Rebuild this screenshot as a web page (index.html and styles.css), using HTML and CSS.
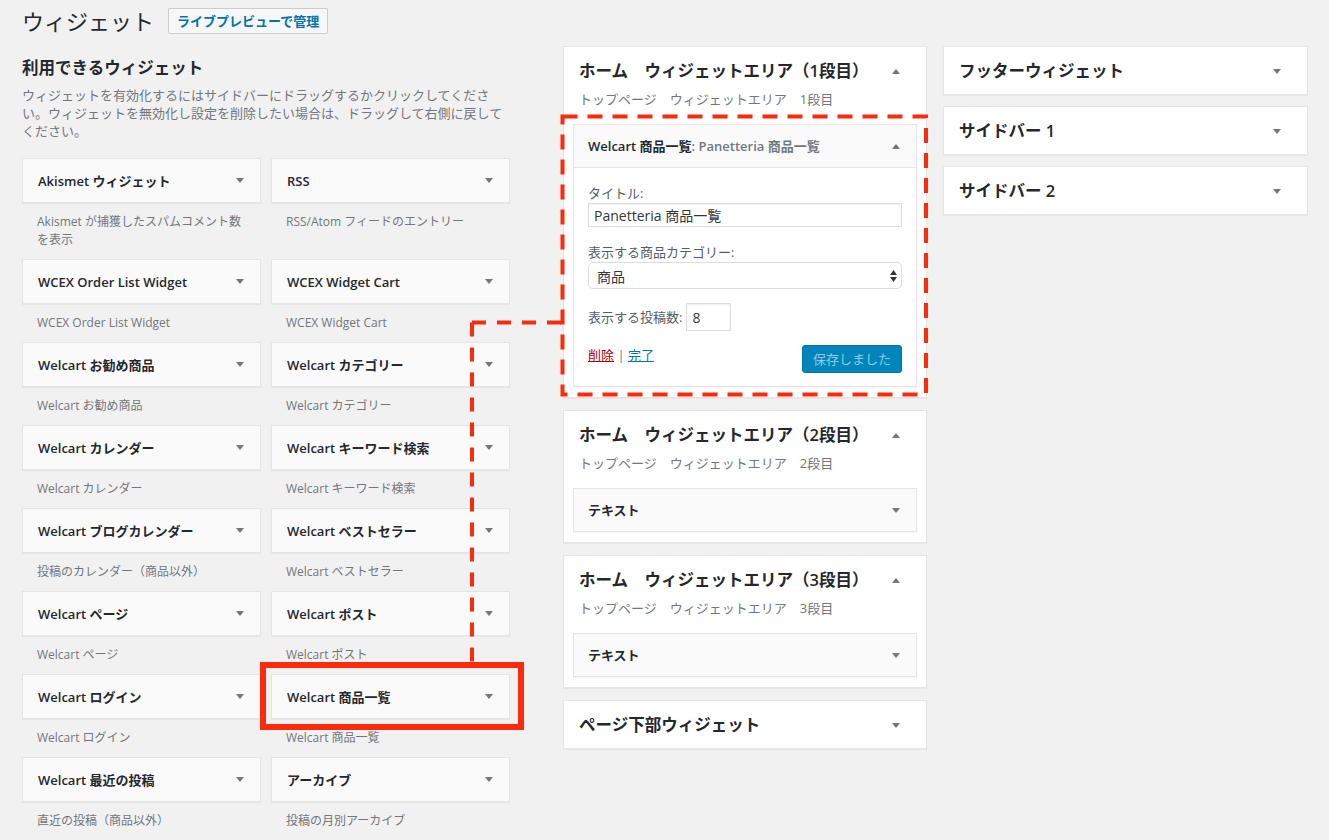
FILE: index.html
```html
<!DOCTYPE html>
<html lang="ja">
<head>
<meta charset="utf-8">
<title>ウィジェット</title>
<link rel="stylesheet" href="styles.css">
</head>
<body>
<div class="wrap">
  <div class="page-head">
    <h1>ウィジェット</h1>
    <a class="head-btn" href="#">ライブプレビューで管理</a>
  </div>

  <div class="columns">
    <section class="available">
      <h2>利用できるウィジェット</h2>
      <p class="intro">ウィジェットを有効化するにはサイドバーにドラッグするかクリックしてください。ウィジェットを無効化し設定を削除したい場合は、ドラッグして右側に戻してください。</p>
      <ul class="widget-grid">
        <li><div class="widget-top"><h3>Akismet ウィジェット</h3><span class="arrow-down"></span></div><p class="widget-desc">Akismet が捕獲したスパムコメント数を表示</p></li>
        <li><div class="widget-top"><h3>RSS</h3><span class="arrow-down"></span></div><p class="widget-desc">RSS/Atom フィードのエントリー</p></li>
        <li><div class="widget-top"><h3>WCEX Order List Widget</h3><span class="arrow-down"></span></div><p class="widget-desc">WCEX Order List Widget</p></li>
        <li><div class="widget-top"><h3>WCEX Widget Cart</h3><span class="arrow-down"></span></div><p class="widget-desc">WCEX Widget Cart</p></li>
        <li><div class="widget-top"><h3>Welcart お勧め商品</h3><span class="arrow-down"></span></div><p class="widget-desc">Welcart お勧め商品</p></li>
        <li><div class="widget-top"><h3>Welcart カテゴリー</h3><span class="arrow-down"></span></div><p class="widget-desc">Welcart カテゴリー</p></li>
        <li><div class="widget-top"><h3>Welcart カレンダー</h3><span class="arrow-down"></span></div><p class="widget-desc">Welcart カレンダー</p></li>
        <li><div class="widget-top"><h3>Welcart キーワード検索</h3><span class="arrow-down"></span></div><p class="widget-desc">Welcart キーワード検索</p></li>
        <li><div class="widget-top"><h3>Welcart ブログカレンダー</h3><span class="arrow-down"></span></div><p class="widget-desc">投稿のカレンダー（商品以外）</p></li>
        <li><div class="widget-top"><h3>Welcart ベストセラー</h3><span class="arrow-down"></span></div><p class="widget-desc">Welcart ベストセラー</p></li>
        <li><div class="widget-top"><h3>Welcart ページ</h3><span class="arrow-down"></span></div><p class="widget-desc">Welcart ページ</p></li>
        <li><div class="widget-top"><h3>Welcart ポスト</h3><span class="arrow-down"></span></div><p class="widget-desc">Welcart ポスト</p></li>
        <li><div class="widget-top"><h3>Welcart ログイン</h3><span class="arrow-down"></span></div><p class="widget-desc">Welcart ログイン</p></li>
        <li><div class="widget-top"><h3>Welcart 商品一覧</h3><span class="arrow-down"></span></div><p class="widget-desc">Welcart 商品一覧</p></li>
        <li><div class="widget-top"><h3>Welcart 最近の投稿</h3><span class="arrow-down"></span></div><p class="widget-desc">直近の投稿（商品以外）</p></li>
        <li><div class="widget-top"><h3>アーカイブ</h3><span class="arrow-down"></span></div><p class="widget-desc">投稿の月別アーカイブ</p></li>
      </ul>
    </section>

    <section class="sidebars sidebars-mid">
      <div class="sidebar-box">
        <div class="sidebar-name"><h2>ホーム　ウィジェットエリア（1段目）</h2><span class="arrow-up"></span></div>
        <p class="sidebar-desc">トップページ　ウィジェットエリア　1段目</p>
        <div class="sidebar-widgets">
          <div class="widget-open">
            <div class="widget-head"><h3>Welcart 商品一覧<span class="in-title">: Panetteria 商品一覧</span></h3><span class="arrow-up"></span></div>
            <div class="widget-inside">
              <label class="field-label">タイトル:</label>
              <input class="text-input" type="text" value="Panetteria 商品一覧">
              <label class="field-label field-gap">表示する商品カテゴリー:</label>
              <div class="select-box"><span>商品</span>
                <svg class="select-arrows" width="7" height="12" viewBox="0 0 7 12"><path d="M3.5 0 L7 5 H0 Z M0 7 H7 L3.5 12 Z" fill="#333"/></svg>
              </div>
              <div class="num-row"><label class="field-label">表示する投稿数:</label><input class="num-input" type="text" value="8"></div>
              <div class="widget-actions">
                <div class="action-links"><a class="link-delete" href="#">削除</a> <span class="sep">|</span> <a class="link-done" href="#">完了</a></div>
                <span class="save-btn">保存しました</span>
              </div>
            </div>
          </div>
        </div>
      </div>

      <div class="sidebar-box">
        <div class="sidebar-name"><h2>ホーム　ウィジェットエリア（2段目）</h2><span class="arrow-up"></span></div>
        <p class="sidebar-desc">トップページ　ウィジェットエリア　2段目</p>
        <div class="sidebar-widgets">
          <div class="widget-top inner"><h3>テキスト</h3><span class="arrow-down"></span></div>
        </div>
      </div>

      <div class="sidebar-box">
        <div class="sidebar-name"><h2>ホーム　ウィジェットエリア（3段目）</h2><span class="arrow-up"></span></div>
        <p class="sidebar-desc">トップページ　ウィジェットエリア　3段目</p>
        <div class="sidebar-widgets">
          <div class="widget-top inner"><h3>テキスト</h3><span class="arrow-down"></span></div>
        </div>
      </div>

      <div class="sidebar-box closed">
        <div class="sidebar-name"><h2>ページ下部ウィジェット</h2><span class="arrow-down"></span></div>
      </div>
    </section>

    <section class="sidebars sidebars-right">
      <div class="sidebar-box closed">
        <div class="sidebar-name"><h2>フッターウィジェット</h2><span class="arrow-down"></span></div>
      </div>
      <div class="sidebar-box closed">
        <div class="sidebar-name"><h2>サイドバー 1</h2><span class="arrow-down"></span></div>
      </div>
      <div class="sidebar-box closed">
        <div class="sidebar-name"><h2>サイドバー 2</h2><span class="arrow-down"></span></div>
      </div>
    </section>
  </div>
</div>

<svg class="annotations" width="1329" height="840" viewBox="0 0 1329 840">
  <rect x="263" y="665" width="258" height="62" fill="none" stroke="#fb2b0b" stroke-width="6"/>
  <path d="M472 322.5 V662" fill="none" stroke="#fb2b0b" stroke-width="4" stroke-dasharray="14 11"/>
  <path d="M472 322.5 H562.5" fill="none" stroke="#fb2b0b" stroke-width="4" stroke-dasharray="14 11"/>
  <rect x="562.5" y="116.5" width="363.5" height="278" fill="none" stroke="#fb2b0b" stroke-width="4" stroke-dasharray="15 10"/>
</svg>
</body>
</html>
```

FILE: styles.css
```css
html, body {
  margin: 0;
  height: 100%;
  overflow: hidden;
}

body {
  background: #f1f1f1;
  font-family: "Open Sans", "Noto Sans CJK JP", sans-serif;
  font-size: 13px;
  color: #444;
}

.wrap {
  padding: 8px 0 0 22px;
}

/* page heading */
.page-head {
  display: flex;
  align-items: center;
  gap: 14px;
  height: 26px;
}

.page-head h1 {
  margin: 0;
  font-size: 22px;
  font-weight: 400;
  line-height: 26px;
  color: #23282d;
}

.head-btn {
  display: block;
  height: 24px;
  line-height: 24px;
  padding: 0 8px;
  border: 1px solid #ccc;
  border-radius: 2px;
  background: #f7f7f7;
  color: #0073aa;
  font-size: 13px;
  font-weight: 600;
  text-decoration: none;
}

/* columns */
.columns {
  display: flex;
  align-items: flex-start;
  margin-top: 12px;
}

.available {
  width: 488px;
  padding-top: 11px;
}

.available h2 {
  margin: 0;
  font-size: 16.5px;
  font-weight: 600;
  line-height: 22px;
  color: #23282d;
}

.intro {
  margin: 7px 0 0;
  font-size: 13px;
  line-height: 18px;
  color: #72777c;
}

.widget-grid {
  list-style: none;
  margin: 18px 0 0;
  padding: 0;
  display: grid;
  grid-template-columns: 239px 239px;
  column-gap: 10px;
}

.widget-top {
  height: 43px;
  border: 1px solid #e5e5e5;
  background: #fafafa;
  box-shadow: 0 1px 1px rgba(0, 0, 0, 0.04);
  display: flex;
  align-items: center;
  justify-content: space-between;
  padding: 0 16px 0 15px;
}

.widget-top.inner {
  height: 42px;
  padding-left: 14px;
}

.widget-top h3,
.widget-head h3 {
  margin: 0;
  font-size: 13px;
  font-weight: 600;
  line-height: 18px;
  color: #23282d;
  white-space: nowrap;
}

.arrow-down {
  width: 0;
  height: 0;
  border-left: 4px solid transparent;
  border-right: 4px solid transparent;
  border-top: 5px solid #72777c;
  flex: none;
}

.arrow-up {
  width: 0;
  height: 0;
  border-left: 4px solid transparent;
  border-right: 4px solid transparent;
  border-bottom: 5px solid #72777c;
  flex: none;
}

.widget-desc {
  margin: 10px 0;
  padding: 0 15px;
  min-height: 18px;
  font-size: 12px;
  line-height: 18px;
  color: #72777c;
}

/* sidebars */
.sidebars-mid {
  width: 364px;
  margin-left: 53px;
}

.sidebars-right {
  width: 365px;
  margin-left: 16px;
}

.sidebar-box {
  background: #fff;
  border: 1px solid #e5e5e5;
  box-shadow: 0 1px 1px rgba(0, 0, 0, 0.04);
  margin-bottom: 12px;
}

.sidebars-right .sidebar-box {
  margin-bottom: 11px;
}

.sidebar-name {
  display: flex;
  align-items: center;
  justify-content: space-between;
  padding: 14px 26px 0 15px;
}

.sidebar-box.closed .sidebar-name {
  padding-bottom: 13px;
}

.sidebar-name h2 {
  margin: 0;
  font-size: 16.5px;
  font-weight: 600;
  line-height: 20px;
  color: #23282d;
  white-space: nowrap;
}

.sidebar-desc {
  margin: 9px 15px 0;
  font-size: 13px;
  line-height: 18px;
  color: #72777c;
}

.sidebar-widgets {
  padding: 16px 9px 10px;
}

/* expanded widget */
.widget-open {
  border: 1px solid #e5e5e5;
  box-shadow: 0 1px 1px rgba(0, 0, 0, 0.04);
  background: #fff;
}

.widget-head {
  height: 42px;
  background: #fafafa;
  border-bottom: 1px solid #e5e5e5;
  display: flex;
  align-items: center;
  justify-content: space-between;
  padding: 0 16px 0 14px;
}

.in-title {
  color: #72777c;
}

.widget-inside {
  padding: 16px 14px 13px;
}

.field-label {
  display: block;
  font-size: 13px;
  line-height: 18px;
  color: #555d66;
}

.field-gap {
  margin-top: 16px;
}

.text-input {
  display: block;
  box-sizing: border-box;
  width: 100%;
  height: 24px;
  margin: 1px 0 0;
  padding: 0 5px;
  border: 1px solid #ddd;
  box-shadow: inset 0 1px 2px rgba(0, 0, 0, 0.07);
  background: #fff;
  font-family: "Open Sans", "Noto Sans CJK JP", sans-serif;
  font-size: 14px;
  color: #32373c;
  outline: none;
}

.select-box {
  box-sizing: border-box;
  height: 27px;
  margin-top: 1px;
  padding: 0 4px 0 8px;
  border: 1px solid #ddd;
  border-radius: 5px;
  background: #fff;
  display: flex;
  align-items: center;
  justify-content: space-between;
  font-size: 14px;
  color: #32373c;
}

.select-arrows {
  display: block;
}

.num-row {
  display: flex;
  align-items: center;
  gap: 4px;
  margin-top: 14px;
}

.num-input {
  box-sizing: border-box;
  width: 45px;
  height: 28px;
  margin: 0;
  padding: 0 5px;
  border: 1px solid #ddd;
  box-shadow: inset 0 1px 2px rgba(0, 0, 0, 0.07);
  background: #fff;
  font-family: "Open Sans", "Noto Sans CJK JP", sans-serif;
  font-size: 14px;
  color: #32373c;
  outline: none;
}

.widget-actions {
  display: flex;
  align-items: flex-start;
  justify-content: space-between;
  margin-top: 14px;
}

.action-links {
  font-size: 13px;
  line-height: 20px;
}

.link-delete {
  color: #a00;
}

.link-done {
  color: #0073aa;
}

.sep {
  color: #72777c;
}

.save-btn {
  box-sizing: border-box;
  width: 100px;
  height: 28px;
  line-height: 26px;
  text-align: center;
  border: 1px solid #0073aa;
  border-radius: 3px;
  background: #0085ba;
  color: #8fcbe6;
  font-size: 13px;
}

/* red annotations drawn over the page */
.annotations {
  position: absolute;
  left: 0;
  top: 0;
  pointer-events: none;
}
```
